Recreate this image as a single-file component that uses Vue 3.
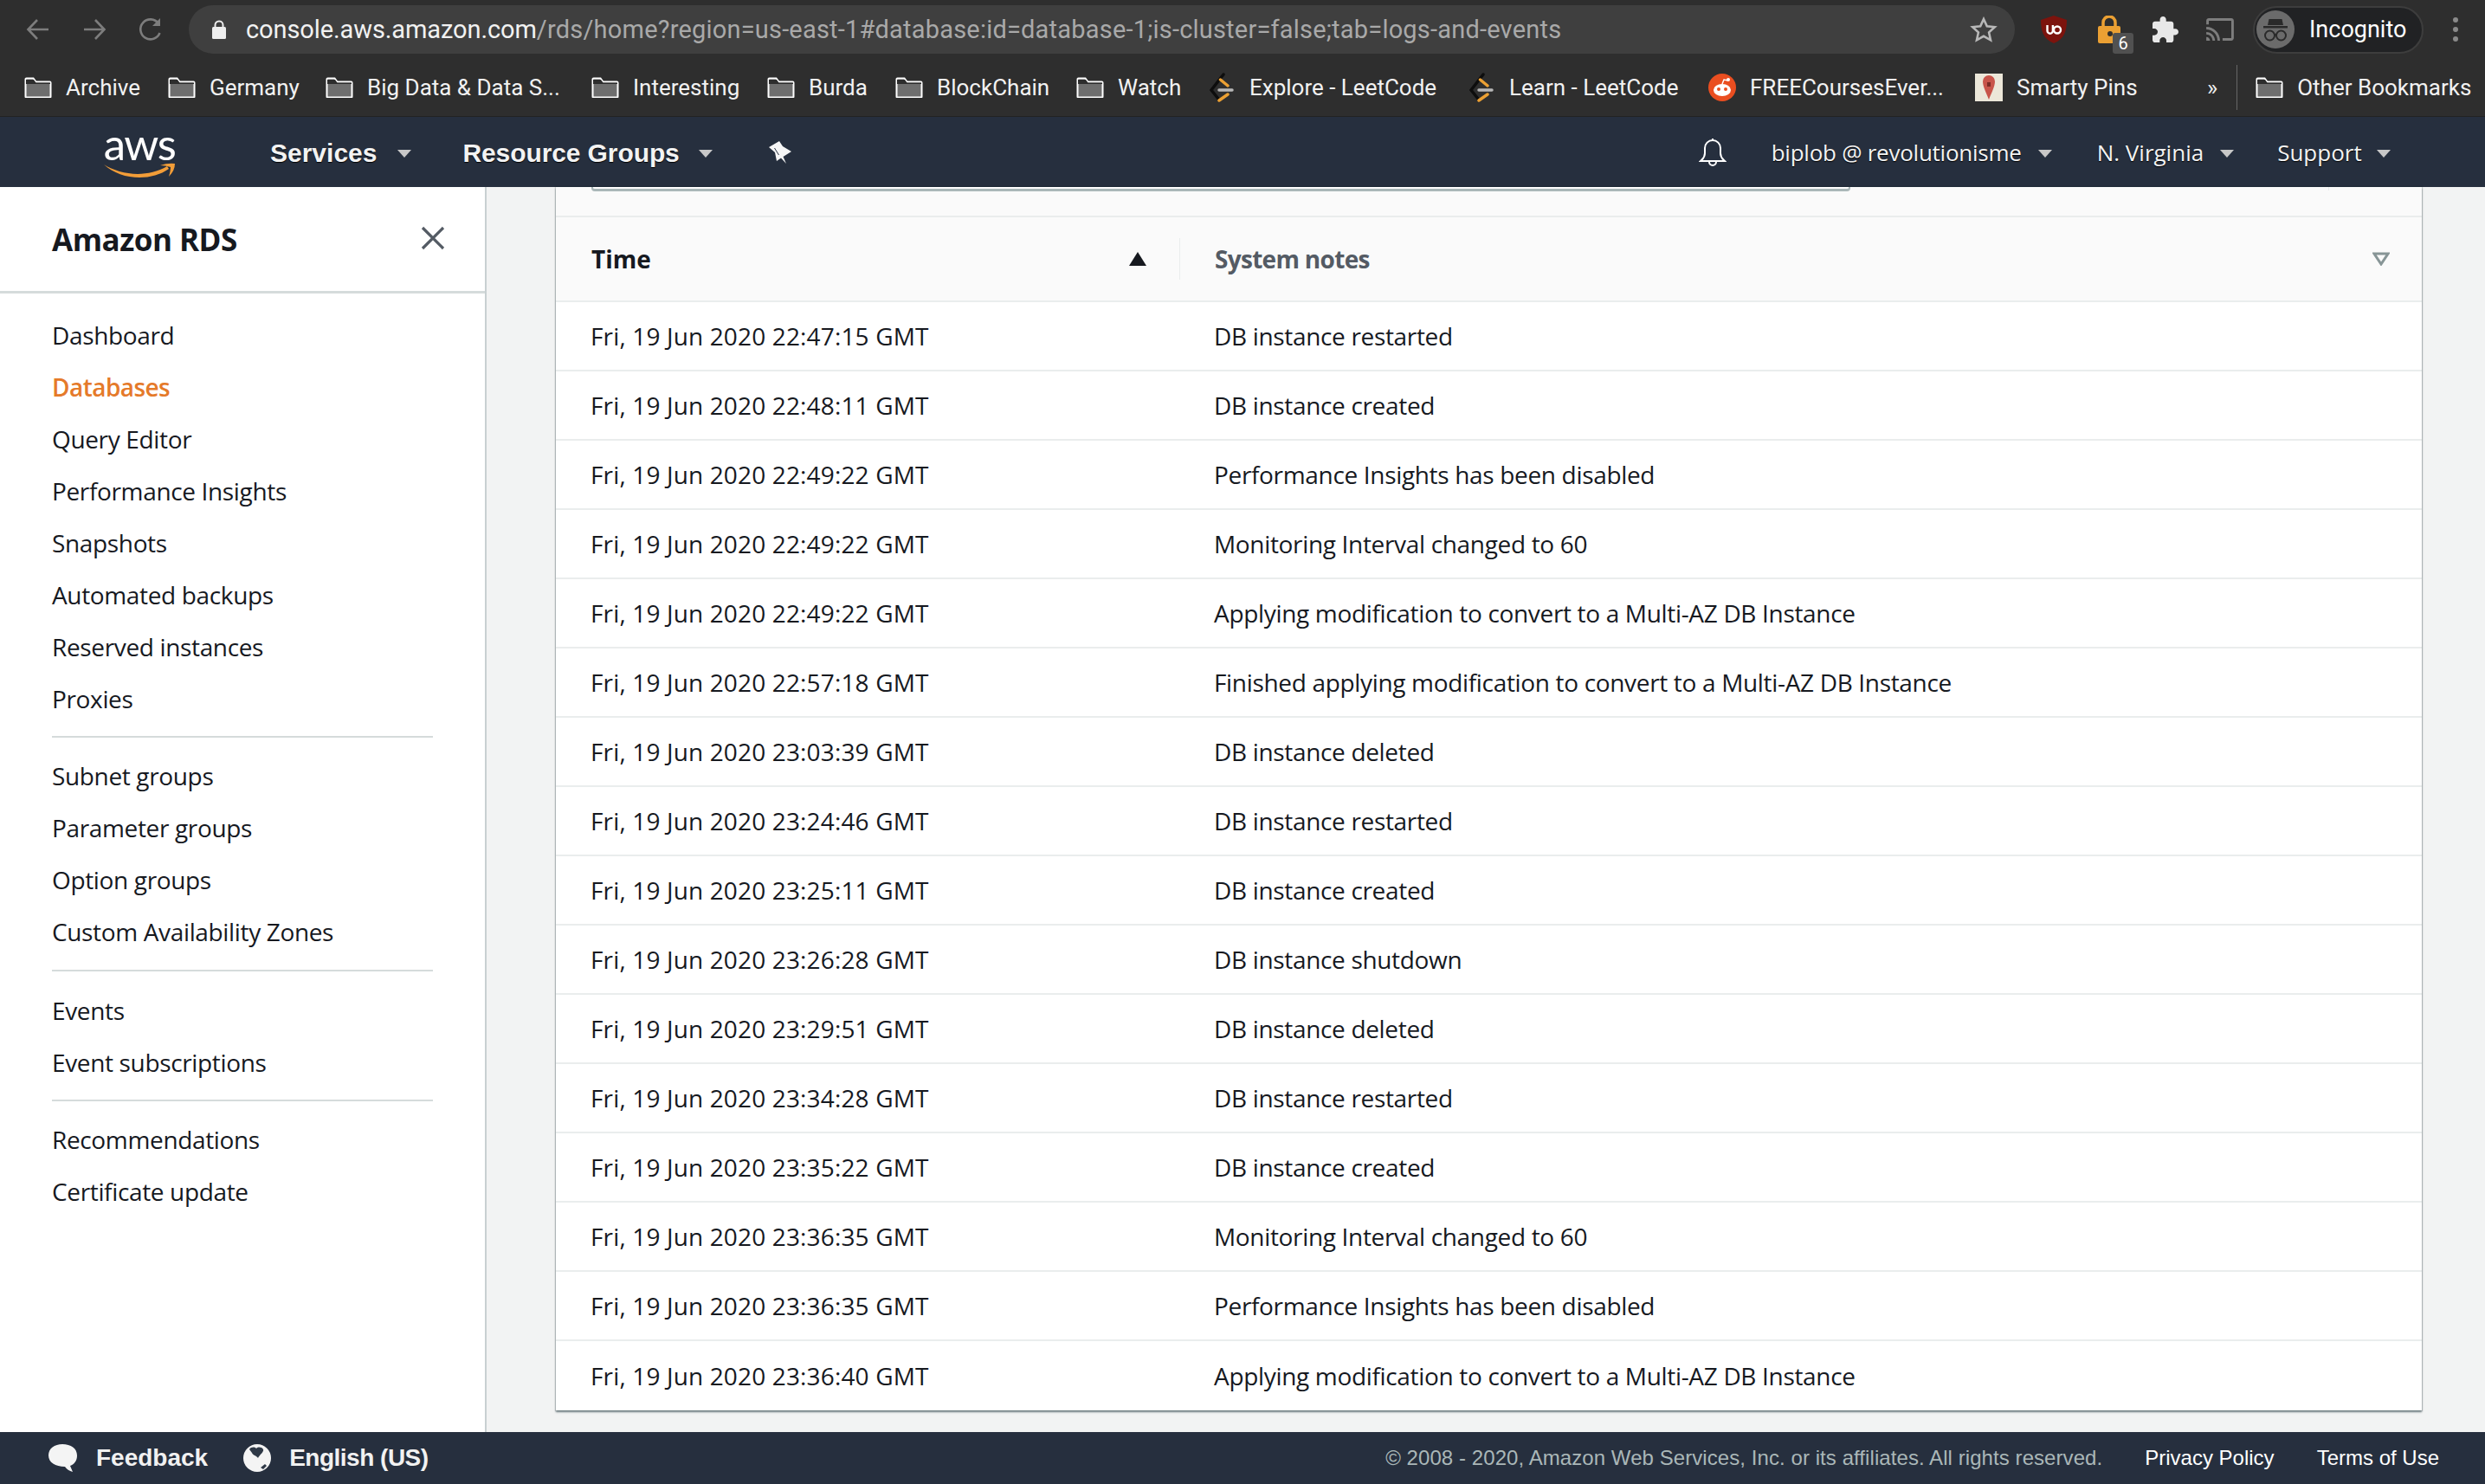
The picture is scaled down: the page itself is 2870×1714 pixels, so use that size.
<script setup>
const bookmarks = [
  { label: 'Archive', icon: 'folder', w: 85 },
  { label: 'Germany', icon: 'folder', w: 101 },
  { label: 'Big Data & Data S...', icon: 'folder', w: 226 },
  { label: 'Interesting', icon: 'folder', w: 122 },
  { label: 'Burda', icon: 'folder', w: 67 },
  { label: 'BlockChain', icon: 'folder', w: 128 },
  { label: 'Watch', icon: 'folder', w: 73 },
  { label: 'Explore - LeetCode', icon: 'leet', w: 221 },
  { label: 'Learn - LeetCode', icon: 'leet', w: 197 },
  { label: 'FREECoursesEver...', icon: 'reddit', w: 227 },
  { label: 'Smarty Pins', icon: 'pin', w: 136 }
]
const navGroups = [
  ['Dashboard', 'Databases', 'Query Editor', 'Performance Insights', 'Snapshots', 'Automated backups', 'Reserved instances', 'Proxies'],
  ['Subnet groups', 'Parameter groups', 'Option groups', 'Custom Availability Zones'],
  ['Events', 'Event subscriptions'],
  ['Recommendations', 'Certificate update']
]
const rows = [
  ['22:47:15', 'DB instance restarted'],
  ['22:48:11', 'DB instance created'],
  ['22:49:22', 'Performance Insights has been disabled'],
  ['22:49:22', 'Monitoring Interval changed to 60'],
  ['22:49:22', 'Applying modification to convert to a Multi-AZ DB Instance'],
  ['22:57:18', 'Finished applying modification to convert to a Multi-AZ DB Instance'],
  ['23:03:39', 'DB instance deleted'],
  ['23:24:46', 'DB instance restarted'],
  ['23:25:11', 'DB instance created'],
  ['23:26:28', 'DB instance shutdown'],
  ['23:29:51', 'DB instance deleted'],
  ['23:34:28', 'DB instance restarted'],
  ['23:35:22', 'DB instance created'],
  ['23:36:35', 'Monitoring Interval changed to 60'],
  ['23:36:35', 'Performance Insights has been disabled'],
  ['23:36:40', 'Applying modification to convert to a Multi-AZ DB Instance']
]
</script>

<template>
  <div class="page">
    <header class="toolbar">
      <svg class="tb-ico" width="30" height="30" viewBox="0 0 30 30" fill="none" stroke="#7d7d7d" stroke-width="2.6"><path d="M27 15H4M14 4 3.500 15 14 26" /></svg>
      <svg class="tb-ico fwd" width="30" height="30" viewBox="0 0 30 30" fill="none" stroke="#7d7d7d" stroke-width="2.6"><path d="M3 15h23M16 4l10.500 11L16 26" /></svg>
      <svg class="tb-ico rel" width="30" height="30" viewBox="0 0 30 30" fill="none" stroke="#7d7d7d" stroke-width="2.6"><path d="M25.500 19A11.500 11.500 0 1 1 24 8" /><path d="M26 2v9h-9" fill="#7d7d7d" stroke="none" /></svg>
      <div class="url">
        <svg width="16" height="22" viewBox="0 0 16 22"><path d="M3.500 9V6a4.500 4.500 0 0 1 9 0v3" fill="none" stroke="#eee" stroke-width="2"/><rect y="8" width="16" height="14" rx="1.500" fill="#eee"/></svg>
        <span class="url-text"><b>console.aws.amazon.com</b>/rds/home?region=us-east-1#database:id=database-1;is-cluster=false;tab=logs-and-events</span>
        <svg class="star" width="32" height="30" viewBox="0 0 32 30" fill="none" stroke="#b8b8b8" stroke-width="2.600"><path d="m16 3 3.800 8.300 9 1-6.700 6.100 1.900 8.900L16 22.800 8 27.300l1.900-8.900-6.700-6.100 9-1z"/></svg>
      </div>
      <svg class="ext ub" width="30" height="32" viewBox="0 0 30 32"><path d="M15 0 30 5c0 13-3 22-15 27C3 27 0 18 0 5z" fill="#7c130d"/><path d="M7.500 11v6.500a3.200 3.200 0 0 0 6.400 0V11" fill="none" stroke="#fff" stroke-width="2.400"/><circle cx="19" cy="16.500" r="4" fill="none" stroke="#fff" stroke-width="2.400"/></svg>
      <div class="ext lock">
        <svg width="26" height="32" viewBox="0 0 26 32"><path d="M6 14V8a7 7 0 0 1 14 0v6" fill="none" stroke="#eba033" stroke-width="3.500"/><rect y="12" width="26" height="20" rx="2" fill="#eba033"/><circle cx="14" cy="21" r="3" fill="#2d2d2d"/></svg>
        <span class="badge">6</span>
      </div>
      <svg class="ext puz" width="30" height="30" viewBox="2 1 21 21"><path fill="#e8e8e8" d="M20.500 11H19V7c0-1.100-.9-2-2-2h-4V3.500C13 2.120 11.880 1 10.500 1S8 2.120 8 3.500V5H4c-1.100 0-1.990.9-1.990 2v3.800H3.500c1.490 0 2.700 1.210 2.700 2.700s-1.210 2.700-2.700 2.700H2V20c0 1.100.9 2 2 2h3.800v-1.500c0-1.490 1.210-2.700 2.700-2.700 1.490 0 2.700 1.210 2.700 2.700V22H17c1.100 0 2-.9 2-2v-4h1.500c1.380 0 2.500-1.120 2.500-2.500S21.880 11 20.500 11z"/></svg>
      <svg class="ext cast" width="32" height="26" viewBox="1 3 22 18"><path fill="#7d7d7d" d="M21 3H3c-1.100 0-2 .9-2 2v3h2V5h18v14h-7v2h7c1.100 0 2-.9 2-2V5c0-1.100-.9-2-2-2zM1 18v3h3c0-1.660-1.340-3-3-3zm0-4v2c2.760 0 5 2.240 5 5h2c0-3.870-3.130-7-7-7zm0-4v2c4.970 0 9 4.030 9 9h2c0-6.080-4.930-11-11-11z"/></svg>
      <div class="incog">
        <svg width="44" height="44" viewBox="0 0 44 44"><circle cx="22" cy="22" r="22" fill="#6b6b6b"/><path d="M8 18h28v2.500H8zM13 17l1.500-7h15l1.500 7z" fill="#2a2a2a"/><g fill="none" stroke="#2a2a2a" stroke-width="2"><circle cx="15.500" cy="29" r="5.500"/><circle cx="28.500" cy="29" r="5.500"/><path d="M21 28h2"/></g></svg>
        <span>Incognito</span>
      </div>
      <div class="dots"><i></i><i></i><i></i></div>
    </header>

    <nav class="bookmarks">
      <div v-for="b in bookmarks" :key="b.label" class="bm">
        <svg v-if="b.icon === 'folder'" width="32" height="24" viewBox="0 0 32 24" class="bm-ico"><path d="M1.500 22.500V2.500a1 1 0 0 1 1-1h8l3 4h16a1 1 0 0 1 1 1v16a1 1 0 0 1-1 1h-27a1 1 0 0 1-1-1z" fill="#6e6e6e" stroke="#fff" stroke-width="2"/><path d="M2 3h9l2.500 3.500H30V8H2z" fill="#2d2d2d"/></svg>
        <svg v-else-if="b.icon === 'leet'" width="30" height="34" viewBox="0 0 30 34" class="bm-ico" fill="none" stroke-linecap="round"><path d="M16 2 2 20l8 10" stroke="#0d0d0d" stroke-width="3.500"/><path d="M12.500 8 21 15M11 32l10-7" stroke="#eba033" stroke-width="3.500"/><path d="M11 20h15" stroke="#b8b8b8" stroke-width="3.500"/></svg>
        <svg v-else-if="b.icon === 'reddit'" width="32" height="32" viewBox="0 0 32 32" class="bm-ico"><circle cx="16" cy="16" r="16" fill="#ea4e20"/><ellipse cx="16" cy="19" rx="10" ry="7" fill="#fff"/><circle cx="12" cy="18" r="2" fill="#ea4e20"/><circle cx="20" cy="18" r="2" fill="#ea4e20"/><circle cx="23" cy="7" r="2" fill="#fff"/><path d="M16 12l2-5 5 1" fill="none" stroke="#fff" stroke-width="1.500"/></svg>
        <svg v-else width="32" height="32" viewBox="0 0 32 32" class="bm-ico"><rect width="32" height="32" fill="#ece7d9"/><path d="M16 30C13 22 9 15 9 9a7 7 0 0 1 14 0c0 6-4 13-7 21z" fill="#c8544a"/><rect x="14" y="10" width="4" height="5" fill="#7b2b26"/></svg>
        <span class="bm-label" :style="{ width: b.w + 'px' }">{{ b.label }}</span>
      </div>
      <span class="more">»</span>
      <span class="bm-sep"></span>
      <div class="bm other">
        <svg width="32" height="24" viewBox="0 0 32 24" class="bm-ico"><path d="M1.500 22.500V2.500a1 1 0 0 1 1-1h8l3 4h16a1 1 0 0 1 1 1v16a1 1 0 0 1-1 1h-27a1 1 0 0 1-1-1z" fill="#6e6e6e" stroke="#fff" stroke-width="2"/><path d="M2 3h9l2.500 3.500H30V8H2z" fill="#2d2d2d"/></svg>
        <span class="bm-label">Other Bookmarks</span>
      </div>
    </nav>

    <div class="awsnav">
      <div class="logo">
        <span class="logo-text">aws</span>
        <svg width="84" height="20" viewBox="0 0 84 20"><path d="M1 3C20 15 50 19 74 5l2 3C55 23 20 21 1 3z" fill="#f29d38"/><path d="M66 4q9-3 17-2 0 8-7 15 2-7 2-11-6-2-12-2z" fill="#f29d38"/></svg>
      </div>
      <span class="nav-b services">Services</span><i class="caret c1"></i>
      <span class="nav-b rg">Resource Groups</span><i class="caret c2"></i>
      <svg class="pin" width="28" height="28" viewBox="8 12 28 28"><path d="M9 20 21 13l4 6 10 6-9.500 6 3.500 8-6-6.500L18 36l-2-10z" fill="#f6f6f6"/><path d="M15.500 21l5 8" stroke="#262f3e" stroke-width="1"/></svg>
      <svg class="bell" width="32" height="34" viewBox="0 0 32 34" fill="none" stroke="#fff" stroke-width="2"><path d="M2 27c3-3 5-4 5-9v-6a9 9 0 0 1 18 0v6c0 5 2 6 5 9z"/><path d="M16 3V1M12 28a4 4 0 0 0 8 0"/></svg>
      <span class="nav-r user">biplob @ revolutionisme</span><i class="caret c3"></i>
      <span class="nav-r region">N. Virginia</span><i class="caret c4"></i>
      <span class="nav-r support">Support</span><i class="caret c5"></i>
    </div>

    <div class="main">
      <aside class="side">
        <div class="side-head">
          <span class="side-title">Amazon RDS</span>
          <svg class="close" width="28" height="28" viewBox="0 0 28 28" stroke="#545b64" stroke-width="3.200" fill="none"><path d="M2 2l24 24M26 2 2 26"/></svg>
        </div>
        <div class="side-list">
          <ul v-for="(g, i) in navGroups" :key="i" class="side-group">
            <li v-for="n in g" :key="n" :class="{ active: n === 'Databases' }">{{ n }}</li>
          </ul>
        </div>
      </aside>
      <section class="content">
        <div class="card">
          <div class="filter"><div class="filter-input"></div><i class="filter-tick"></i></div>
          <div class="thead">
            <div class="th time">
              <span>Time</span>
              <svg class="sort" width="20" height="16" viewBox="0 0 20 16"><path d="M10 0l10 16H0z" fill="#16191f"/></svg>
            </div>
            <div class="th notes">
              <span>System notes</span>
              <svg class="flt" width="20" height="16" viewBox="0 0 20 16" fill="none" stroke="#879596" stroke-width="3"><path d="M2 2h16l-8 12z"/></svg>
            </div>
          </div>
          <div v-for="(r, i) in rows" :key="i" class="row">
            <span class="td-time">Fri, 19 Jun 2020 {{ r[0] }} GMT</span>
            <span class="td-note">{{ r[1] }}</span>
          </div>
        </div>
      </section>
    </div>

    <footer class="foot">
      <svg class="f-ico" width="36" height="34" viewBox="0 0 36 34"><path d="M17 1c10 0 17 5 17 13 0 6-3 10-8 12l3 7c-4-1-7-3-9-6C9 27 1 22 1 14 1 6 8 1 17 1z" fill="#f4f4f4"/></svg>
      <span class="f-b feedback">Feedback</span>
      <svg class="f-ico globe" width="32" height="32" viewBox="0 0 32 32"><circle cx="16" cy="16" r="16" fill="#f4f4f4"/><path d="M7 6c2-3 6-3 8-1 2-2 6-2 8 1 1 3-4 6-6 10-2-3-6-3-7-6zM20 27l5-4 2 2-4 4z" fill="#2f3947"/></svg>
      <span class="f-b english">English (US)</span>
      <span class="copy">© 2008 - 2020, Amazon Web Services, Inc. or its affiliates. All rights reserved.</span>
      <span class="f-link">Privacy Policy</span>
      <span class="f-link terms">Terms of Use</span>
    </footer>
  </div>
</template>

<style>
html, body { margin: 0; padding: 0; background: #fff; }
</style>

<style scoped>
.page { width: 2870px; height: 1714px; display: flex; flex-direction: column; overflow: hidden; font-family: "Open Sans", "Noto Sans", sans-serif; }

.toolbar { height: 68px; background: #2e2e2e; display: flex; align-items: center; padding-left: 29px; flex: none; }
.tb-ico { flex: none; }
.fwd { margin-left: 35px; }
.rel { margin-left: 35px; }
.url { margin-left: 29px; width: 2109px; height: 56px; border-radius: 28px; background: #3f3f3f; display: flex; align-items: center; padding-left: 27px; box-sizing: border-box; flex: none; }
.url-text { margin-left: 23px; font-family: Roboto, sans-serif; font-size: 29px; letter-spacing: 0.2px; color: #a9a9a9; white-space: nowrap; }
.url-text b { font-weight: 400; color: #f1f1f1; letter-spacing: -0.1px; }
.star { margin-left: auto; margin-right: 20px; }
.ext { flex: none; }
.ub { margin-left: 30px; }
.lock { margin-left: 36px; position: relative; width: 26px; height: 32px; }
.lock svg { display: block; }
.badge { position: absolute; left: 17px; top: 20px; width: 24px; height: 24px; background: #515151; border-radius: 3px; color: #fff; font: 20px/24px Roboto, sans-serif; text-align: center; }
.puz { margin-left: 37px; }
.cast { margin-left: 32px; }
.incog { margin-left: 22px; width: 197px; height: 55px; box-sizing: border-box; border: 2px solid #3d3d3d; border-radius: 28px; background: #212224; display: flex; align-items: center; padding-left: 2px; color: #fff; font: 27px Roboto, sans-serif; flex: none; }
.incog span { margin-left: 17px; }
.dots { margin-left: 34px; display: flex; flex-direction: column; gap: 5px; }
.dots i { width: 6px; height: 6px; border-radius: 50%; background: #8a8a8a; display: block; }

.bookmarks { height: 67px; background: #2e2e2e; display: flex; align-items: center; padding-left: 28px; flex: none; border-bottom: 1px solid #222; box-sizing: border-box; }
.bm { display: flex; align-items: center; margin-right: 33px; flex: none; }
.bm-ico { flex: none; margin-right: 16px; }
.bm-label { font-family: Roboto, sans-serif; font-size: 26px; color: #f2f2f2; white-space: nowrap; display: block; }
.more { color: #eee; font: 26px Roboto, sans-serif; margin-left: 51px; }
.bm-sep { width: 1px; height: 52px; background: #666; margin-left: 22px; margin-right: 21px; }
.other { margin-right: 0; }

.awsnav { height: 81px; background: #262f3e; display: flex; align-items: center; flex: none; font-family: "Liberation Sans", sans-serif; color: #f3f3f3; }
.logo { margin-left: 119px; width: 84px; display: flex; flex-direction: column; align-items: center; height: 62px; }
.logo-text { font: 400 51px/42px Lato, sans-serif; color: #fff; letter-spacing: -1.500px; height: 45px; }
.logo svg { flex: none; }
.nav-b { font-weight: 700; font-size: 30px; text-shadow: 0 1px 1px #000; padding-top: 2px; }
.nav-r { font-family: "Open Sans", sans-serif; font-size: 26px; text-shadow: 0 1px 1px #000; padding-top: 1px; }
.caret { width: 0; height: 0; border-left: 8px solid transparent; border-right: 8px solid transparent; border-top: 9px solid #c8c8c8; margin-top: 4px; flex: none; }
.services { margin-left: 109px; }
.c1 { margin-left: 24px; }
.rg { margin-left: 59px; letter-spacing: -0.1px; }
.c2 { margin-left: 22px; }
.pin { margin-left: 64px; }
.bell { margin-left: 1047px; }
.user { margin-left: 52px; letter-spacing: -0.25px; }
.c3 { margin-left: 19px; }
.region { margin-left: 52px; }
.c4 { margin-left: 19px; }
.support { margin-left: 50px; }
.c5 { margin-left: 17px; }

.main { flex: 1; display: flex; min-height: 0; }
.side { width: 562px; flex: none; background: #fff; border-right: 2px solid #c8d0d2; box-sizing: border-box; }
.side-head { height: 123px; border-bottom: 3px solid #d5dbdb; display: flex; align-items: center; justify-content: space-between; padding: 0 46px 0 60px; box-sizing: border-box; }
.side-title { font-weight: 700; font-size: 35px; letter-spacing: -0.5px; color: #16191f; }
.close { margin-top: -2px; }
.side-list { padding: 18px 60px 0; }
.side-group { list-style: none; margin: 0 0 14px; padding: 0 0 13px; border-bottom: 2px solid #d5dbdb; }
.side-group:nth-child(2) { margin-bottom: 15px; padding-bottom: 14px; }
.side-group:last-child { border-bottom: 0; }
.side-group li { height: 60px; line-height: 60px; font-size: 28px; letter-spacing: -0.35px; color: #16191f; white-space: nowrap; }
.side-group li.active { color: #e57a2a; font-weight: 600; letter-spacing: -0.55px; }

.content { flex: 1; background: #f2f3f3; padding-left: 80px; min-width: 0; }
.card { width: 2155px; background: #fff; box-shadow: 0 2px 2px rgba(0,28,36,.5), 0 0 1px 1px rgba(0,28,36,.15); }
.filter { height: 33px; background: #fafafa; border-bottom: 2px solid #eaeded; padding-left: 41px; display: flex; align-items: flex-start; }
.filter-input { width: 1450px; height: 2px; background: #fff; border-bottom: 3px solid #aab7b8; border-left: 2px solid #aab7b8; border-right: 2px solid #aab7b8; border-radius: 0 0 4px 4px; }
.filter-tick { width: 1px; height: 4px; background: #eaeded; margin-left: 552px; }
.thead { height: 96px; background: #fafafa; border-bottom: 2px solid #eaeded; display: grid; grid-template-columns: 721px 1fr; align-items: center; }
.th { display: flex; align-items: center; font-weight: 700; font-size: 28px; height: 48px; }
.time { padding-left: 41px; color: #16191f; border-right: 1px solid #eaeded; }
.notes { padding-left: 40px; color: #545b64; letter-spacing: -0.7px; }
.sort { margin-left: auto; margin-right: 38px; }
.flt { margin-left: auto; margin-right: 37px; }
.row { height: 80px; box-sizing: border-box; border-bottom: 2px solid #eaeded; display: grid; grid-template-columns: 720px 1fr; align-items: center; font-size: 28px; color: #16191f; white-space: nowrap; }
.row:last-child { border-bottom: 0; }
.td-time { padding-left: 40px; letter-spacing: 0.15px; }
.td-note { padding-left: 40px; letter-spacing: -0.33px; }

.foot { height: 60px; background: #262f3e; display: flex; align-items: center; flex: none; font-family: "Liberation Sans", sans-serif; color: #f1f1f1; }
.f-ico { flex: none; margin-left: 55px; }
.f-b { font-weight: 700; font-size: 28px; }
.feedback { margin-left: 20px; }
.globe { margin-left: 41px; margin-right: 21px; }
.english { letter-spacing: -0.5px; }
.copy { margin-left: auto; font-size: 24px; letter-spacing: 0.07px; color: #aab7b8; }
.f-link { font-size: 24px; color: #fff; margin-left: 49px; }
.terms { margin-right: 53px; }
</style>
